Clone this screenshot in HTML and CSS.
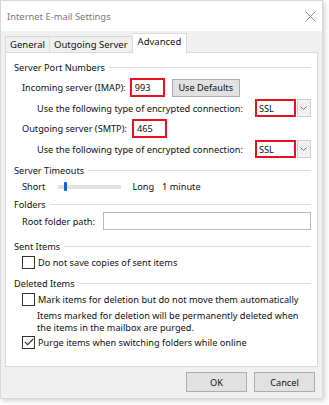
FILE: index.html
```html
<!DOCTYPE html>
<html>
<head>
<meta charset="utf-8">
<link rel="stylesheet" href="styles.css">
</head>
<body>
<div class="dialog">
  <div class="titlebar">
    <span class="title">Internet E-mail Settings</span>
    <svg class="close" width="11" height="11" viewBox="0 0 11 11"><path d="M0.5 0.5L10.5 10.5M10.5 0.5L0.5 10.5" stroke="#8a8a8a" stroke-width="1" fill="none"/></svg>
  </div>
  <div class="body">
    <div class="tabs">
      <div class="tab">General</div>
      <div class="tab">Outgoing Server</div>
      <div class="tab active">Advanced</div>
    </div>
    <div class="panel">
      <div class="group">Server Port Numbers</div>
      <div class="row r-imap">
        <span class="lbl">Incoming server (IMAP):</span>
        <span class="field port red">993</span>
        <span class="btn defaults">Use Defaults</span>
      </div>
      <div class="row r-enc">
        <span class="lbl">Use the following type of encrypted connection:</span>
        <span class="select"><span class="selval red">SSL</span><span class="drop"><svg width="7" height="4" viewBox="0 0 7 4"><path d="M0.5 0.5L3.5 3.5L6.5 0.5" stroke="#777" fill="none"/></svg></span></span>
      </div>
      <div class="row r-smtp">
        <span class="lbl">Outgoing server (SMTP):</span>
        <span class="field port red smtp">465</span>
      </div>
      <div class="row r-enc">
        <span class="lbl">Use the following type of encrypted connection:</span>
        <span class="select"><span class="selval red">SSL</span><span class="drop"><svg width="7" height="4" viewBox="0 0 7 4"><path d="M0.5 0.5L3.5 3.5L6.5 0.5" stroke="#777" fill="none"/></svg></span></span>
      </div>
      <div class="group g-timeouts">Server Timeouts</div>
      <div class="row r-slider">
        <span class="lbl">Short</span>
        <span class="slider"><span class="thumb"></span></span>
        <span class="lbl long">Long</span>
        <span class="lbl">1 minute</span>
      </div>
      <div class="group g-folders">Folders</div>
      <div class="row r-root">
        <span class="lbl">Root folder path:</span>
        <span class="field root"></span>
      </div>
      <div class="group g-sent">Sent Items</div>
      <div class="row r-check">
        <span class="cb"></span><span class="lbl">Do not save copies of sent items</span>
      </div>
      <div class="group g-deleted">Deleted Items</div>
      <div class="row r-check">
        <span class="cb"></span><span class="lbl">Mark items for deletion but do not move them automatically</span>
      </div>
      <div class="note">Items marked for deletion will be permanently deleted when<br>the items in the mailbox are purged.</div>
      <div class="row r-check r-purge">
        <span class="cb checked"><svg width="10" height="8" viewBox="0 0 10 8"><path d="M0.8 3.8L3.6 6.6L9.2 1" stroke="#333" stroke-width="1.1" fill="none"/></svg></span><span class="lbl">Purge items when switching folders while online</span>
      </div>
    </div>
    <div class="footer">
      <span class="btn ok">OK</span>
      <span class="btn cancel">Cancel</span>
    </div>
  </div>
</div>
</body>
</html>
```
FILE: styles.css
```css
* { box-sizing: border-box; }
html, body { margin: 0; padding: 0; background: #ffffff; }
body {
  font-family: "Noto Sans", "Open Sans", sans-serif;
  font-size: 9.2px;
  color: #111111;
  width: 329px;
  height: 405px;
  overflow: hidden;
}
.dialog {
  width: 323px;
  height: 399px;
  background: #f0f0f0;
  border: 1px solid #d8d8d8;
  box-shadow: 2px 2px 5px rgba(0,0,0,0.18);
  display: flex;
  flex-direction: column;
}
.titlebar {
  height: 30px;
  background: #ffffff;
  display: flex;
  align-items: center;
  justify-content: space-between;
  padding: 0 6px 0 6px;
  flex: none;
}
.title { color: #7a7a7a; font-size: 9.4px; }
.body {
  flex: 1;
  padding: 2px 4px 0 4px;
  display: flex;
  flex-direction: column;
}
.tabs {
  display: flex;
  align-items: flex-end;
  height: 19px;
}
.tab {
  height: 16px;
  border: 1px solid #d9d9d9;
  border-bottom: none;
  border-right: none;
  padding: 0 4px;
  line-height: 15px;
  background: #f0f0f0;
  font-size: 9.5px;
}
.tab:nth-child(2) { border-right: 1px solid #d9d9d9; }
.tab.active {
  height: 20px;
  background: #ffffff;
  border-left: none;
  border-right: 1px solid #d9d9d9;
  border-top: 1px solid #d9d9d9;
  line-height: 16px;
  padding: 0 5px;
  margin-bottom: -1px;
  position: relative;
  z-index: 1;
}
.panel {
  height: 315px;
  background: #ffffff;
  border: 1px solid #d9d9d9;
  padding: 6px 6px 0 8px;
}
.group {
  display: flex;
  align-items: center;
  height: 16px;
  white-space: nowrap;
}
.group::after {
  content: "";
  flex: 1;
  border-top: 1px solid #dcdcdc;
  margin-left: 4px;
  margin-top: 1px;
}
.row { display: flex; align-items: center; white-space: nowrap; }
.lbl { white-space: nowrap; }
.red { border: 2px solid #e81123 !important; }
.r-imap { height: 21px; margin-top: 2px; padding-left: 8px; }
.field {
  height: 19px;
  border: 1px solid #b8b8b8;
  background: #fff;
  display: inline-flex;
  align-items: center;
  padding-left: 3px;
}
.port { width: 35px; margin-left: 4px; }
.btn {
  display: inline-flex;
  align-items: center;
  justify-content: center;
  border: 1px solid #adadad;
  background: #e1e1e1;
  height: 18px;
}
.defaults { width: 68px; margin-left: 7px; }
.r-enc { height: 20px; padding-left: 23px; }
.select { display: inline-flex; margin-left: 12px; height: 18px; }
.selval { width: 41px; height: 18px; padding-left: 2px; display: inline-flex; align-items: center; background: #fff; }
.drop {
  width: 14px;
  height: 18px;
  border: 1px solid #d0d0d0;
  background: #f0f0f0;
  margin-left: 1px;
  display: inline-flex;
  align-items: center;
  justify-content: center;
}
.r-smtp { height: 21px; padding-left: 8px; }
.smtp { margin-left: 5px; }
.g-timeouts { margin-top: 3px; }
.r-slider { height: 17px; padding-left: 8px; }
.slider {
  width: 63px;
  height: 4px;
  background: #e2e2e2;
  margin-left: 13px;
  position: relative;
}
.thumb {
  position: absolute;
  left: 6px;
  top: -3px;
  width: 3px;
  height: 9px;
  background: #0a64d8;
  border-radius: 1px;
}
.long { margin-left: 11px; margin-right: 8px; }
.g-folders { margin-top: 1px; }
.r-root { height: 18px; padding-left: 8px; }
.root { width: 209px; height: 18px; margin-left: 8px; }
.g-sent { margin-top: 8px; }
.r-check { height: 16px; padding-left: 8px; }
.cb {
  width: 13px;
  height: 13px;
  border: 1px solid #333;
  background: #fff;
  margin-right: 3px;
  display: inline-flex;
  align-items: center;
  justify-content: center;
}
.g-deleted { margin-top: 5px; }
.note {
  padding-left: 23px;
  line-height: 12px;
  margin-top: 3px;
  white-space: nowrap;
}
.footer {
  flex: 1;
  display: flex;
  justify-content: flex-end;
  align-items: center;
  gap: 7px;
  padding-right: 3px;
  padding-bottom: 1px;
}
.ok, .cancel { width: 61px; height: 20px; }
```
